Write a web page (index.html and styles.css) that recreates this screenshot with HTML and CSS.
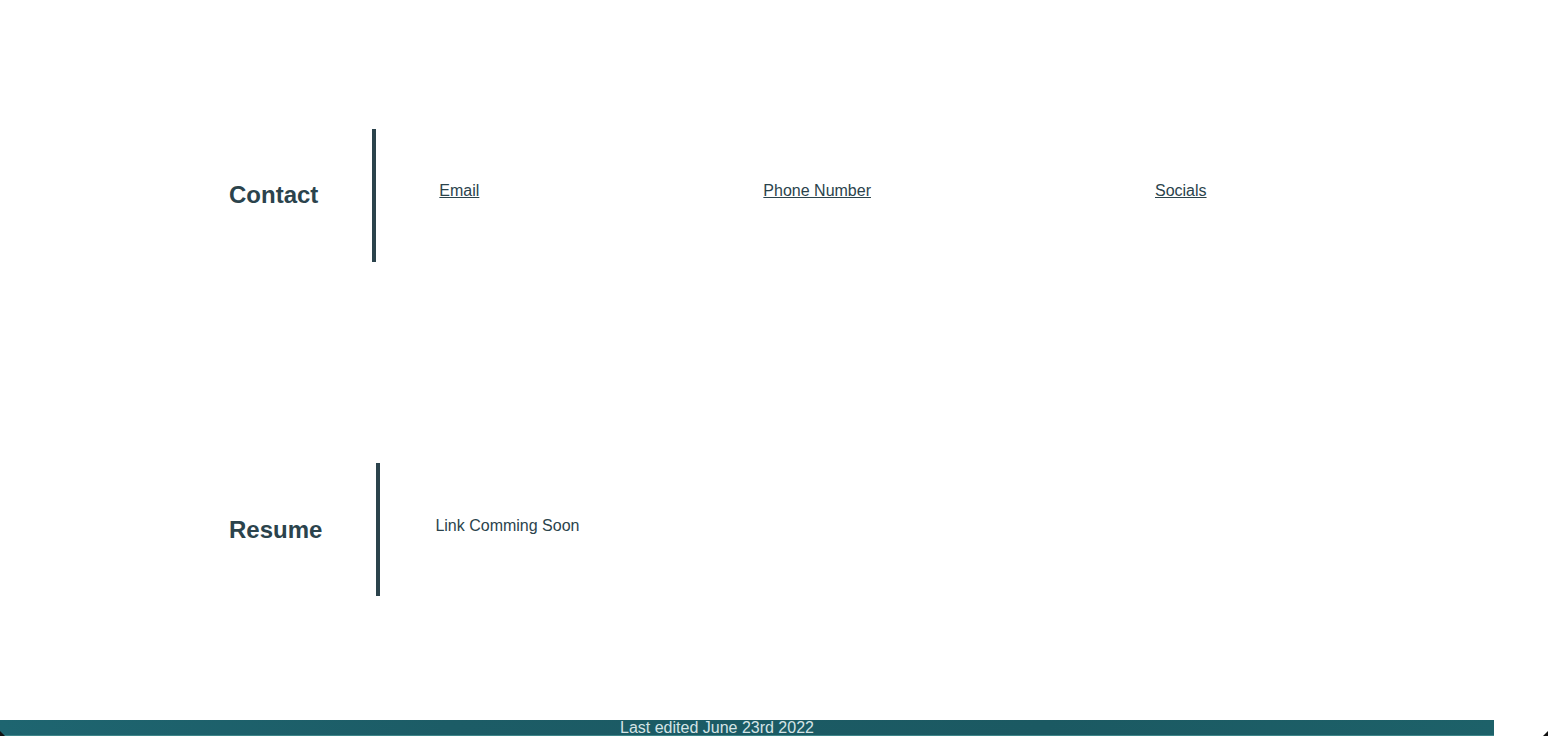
FILE: index.html
```html
<!DOCTYPE html>
<html lang="en">
<head>
<meta charset="utf-8">
<title>Contact</title>
<link rel="stylesheet" href="styles.css">
</head>
<body>
<div class="page">
  <main class="main">
    <section class="row row-contact">
      <h2 class="heading">Contact</h2>
      <div class="content links">
        <a class="link" href="#">Email</a>
        <a class="link" href="#">Phone Number</a>
        <a class="link" href="#">Socials</a>
      </div>
    </section>
    <section class="row row-resume">
      <h2 class="heading">Resume</h2>
      <div class="content note">
        <span>Link Comming Soon</span>
      </div>
    </section>
  </main>
  <footer class="footer">Last edited June 23rd 2022</footer>
</div>
<div class="corner corner-left"></div>
<div class="corner corner-right"></div>
</body>
</html>
```
FILE: styles.css
```css
html, body {
  margin: 0;
  padding: 0;
  background: #ffffff;
}
body {
  font-family: "Liberation Sans", Arial, Helvetica, sans-serif;
  color: #2b434c;
  overflow: hidden;
}
.page {
  height: 736px;
  display: flex;
  flex-direction: column;
}
.main {
  flex: 1;
  padding: 129px 0 0 229px;
  display: flex;
  flex-direction: column;
  gap: 201px;
}
.row {
  display: flex;
  align-items: center;
  height: 133px;
}
.heading {
  margin: 0 54px 0 0;
  font-size: 24px;
  font-weight: bold;
  line-height: normal;
}
.row-contact .heading {
  margin-bottom: 2px;
}
.content {
  height: 133px;
  box-sizing: border-box;
  border-left: 4px solid #2b434c;
  display: flex;
  align-items: center;
  font-size: 16px;
}
.links {
  padding-left: 63px;
  padding-bottom: 10px;
  gap: 284px;
}
.note {
  padding-left: 55px;
  padding-bottom: 7px;
}
.link {
  color: #2b434c;
  text-decoration: underline;
}
.footer {
  width: 1494px;
  height: 16px;
  box-sizing: border-box;
  padding-right: 60px;
  background: linear-gradient(90deg, #1e6570 0%, #1c5c66 30%, #1b5962 70%, #1d6169 100%);
  border-bottom: 1px solid #3d8589;
  color: #d4e4e6;
  font-size: 16px;
  line-height: 15px;
  text-align: center;
  box-shadow: 0 -8px 30px -10px rgba(0, 0, 0, 0.1);
}
.corner {
  position: fixed;
  bottom: 0;
  width: 5px;
  height: 5px;
  background: #111;
}
.corner-left {
  left: 0;
  clip-path: polygon(0 0, 0 100%, 100% 100%);
}
.corner-right {
  right: 0;
  clip-path: polygon(100% 0, 100% 100%, 0 100%);
}
```
